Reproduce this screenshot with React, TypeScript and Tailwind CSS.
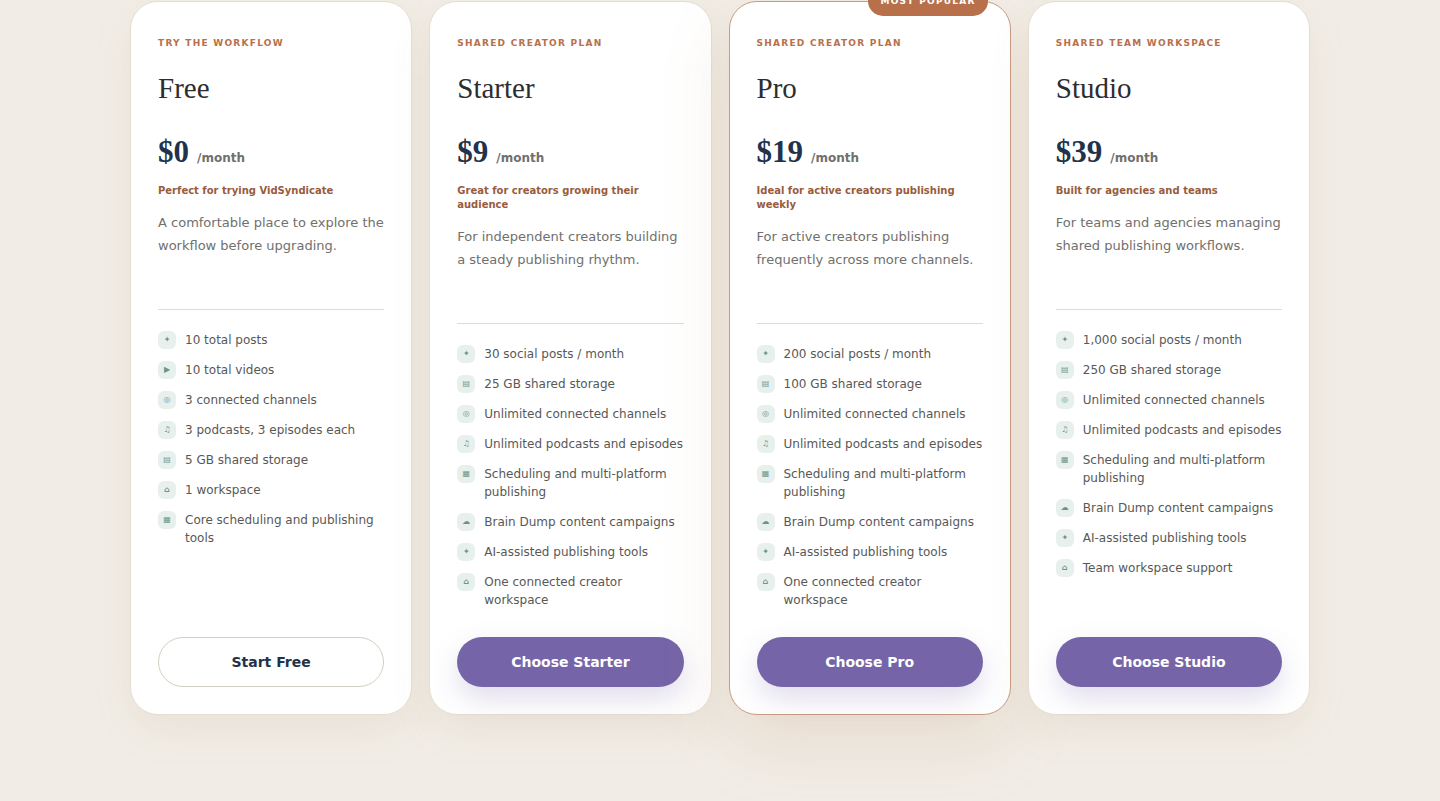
import React from 'react';
import clsx from 'clsx';

interface Feature {
  icon: string;
  label: string;
}

interface Plan {
  name: string;
  eyebrow: string;
  price: string;
  tagline: string;
  description: string;
  cta: string;
  popular?: boolean;
  features: Feature[];
}

const ICONS = {
  posts: '✦',
  videos: '▶',
  channels: '◎',
  podcasts: '♫',
  storage: '▤',
  workspace: '⌂',
  schedule: '▦',
  cloud: '☁',
};

// Included in every paid plan
const SHARED_FEATURES: Feature[] = [
  { icon: ICONS.channels, label: 'Unlimited connected channels' },
  { icon: ICONS.podcasts, label: 'Unlimited podcasts and episodes' },
  { icon: ICONS.schedule, label: 'Scheduling and multi-platform publishing' },
  { icon: ICONS.cloud, label: 'Brain Dump content campaigns' },
  { icon: ICONS.posts, label: 'AI-assisted publishing tools' },
];

const PLANS: Plan[] = [
  {
    name: 'Free',
    eyebrow: 'Try the workflow',
    price: '$0',
    tagline: 'Perfect for trying VidSyndicate',
    description: 'A comfortable place to explore the workflow before upgrading.',
    cta: 'Start Free',
    features: [
      { icon: ICONS.posts, label: '10 total posts' },
      { icon: ICONS.videos, label: '10 total videos' },
      { icon: ICONS.channels, label: '3 connected channels' },
      { icon: ICONS.podcasts, label: '3 podcasts, 3 episodes each' },
      { icon: ICONS.storage, label: '5 GB shared storage' },
      { icon: ICONS.workspace, label: '1 workspace' },
      { icon: ICONS.schedule, label: 'Core scheduling and publishing tools' },
    ],
  },
  {
    name: 'Starter',
    eyebrow: 'Shared creator plan',
    price: '$9',
    tagline: 'Great for creators growing their audience',
    description: 'For independent creators building a steady publishing rhythm.',
    cta: 'Choose Starter',
    features: [
      { icon: ICONS.posts, label: '30 social posts / month' },
      { icon: ICONS.storage, label: '25 GB shared storage' },
      ...SHARED_FEATURES,
      { icon: ICONS.workspace, label: 'One connected creator workspace' },
    ],
  },
  {
    name: 'Pro',
    eyebrow: 'Shared creator plan',
    price: '$19',
    tagline: 'Ideal for active creators publishing weekly',
    description: 'For active creators publishing frequently across more channels.',
    cta: 'Choose Pro',
    popular: true,
    features: [
      { icon: ICONS.posts, label: '200 social posts / month' },
      { icon: ICONS.storage, label: '100 GB shared storage' },
      ...SHARED_FEATURES,
      { icon: ICONS.workspace, label: 'One connected creator workspace' },
    ],
  },
  {
    name: 'Studio',
    eyebrow: 'Shared team workspace',
    price: '$39',
    tagline: 'Built for agencies and teams',
    description: 'For teams and agencies managing shared publishing workflows.',
    cta: 'Choose Studio',
    features: [
      { icon: ICONS.posts, label: '1,000 social posts / month' },
      { icon: ICONS.storage, label: '250 GB shared storage' },
      ...SHARED_FEATURES,
      { icon: ICONS.workspace, label: 'Team workspace support' },
    ],
  },
];

function FeatureItem({ icon, label }: Feature) {
  return (
    <li className="flex items-start gap-[9px] text-[12px] leading-[18px] text-[#585856]">
      <span
        aria-hidden="true"
        className="flex size-[18px] shrink-0 items-center justify-center rounded-md bg-[#e7f0ed] text-[8px] leading-none font-bold text-[#6b9487]"
      >
        {icon}
      </span>
      <span>{label}</span>
    </li>
  );
}

function PlanCard({ plan }: { plan: Plan }) {
  return (
    <article
      className={clsx(
        'relative flex flex-col rounded-[28px] border bg-white px-[27px] pt-[34px] pb-[27px]',
        plan.popular
          ? 'border-[#c79a83] shadow-[0_28px_70px_rgba(184,122,74,0.15)]'
          : 'border-[#e5ddd0] shadow-[0_16px_44px_rgba(150,104,48,0.08)]'
      )}
    >
      {plan.popular && (
        <span className="absolute -top-4 right-[22px] rounded-full bg-[#b8704a] px-3 py-2 text-[9px] leading-[14px] font-bold tracking-[0.14em] text-white uppercase">
          Most popular
        </span>
      )}

      <p className="text-[9px] leading-[14px] font-bold tracking-[0.14em] text-[#b8704a] uppercase">{plan.eyebrow}</p>
      <h3 className="mt-[21px] font-['Liberation_Serif',serif] text-[29px] leading-[34px] text-[#2d2d2f]">
        {plan.name}
      </h3>

      <div className="mt-[29px] flex items-baseline gap-2">
        <strong className="font-['Liberation_Serif',serif] text-[31px] leading-9 font-bold text-[#22324a]">
          {plan.price}
        </strong>
        <span className="text-[12px] font-bold text-[#70706d]">/month</span>
      </div>

      <p className="mt-[14px] text-[10px] leading-[14px] font-bold text-[#985c3c]">{plan.tagline}</p>
      <p className="mt-[13px] min-h-[69px] text-[13px] leading-[23px] text-[#70706d]">{plan.description}</p>

      <ul className="mt-[29px] mb-7 flex flex-col gap-3 border-t border-[#dedcd8] pt-[21px]">
        {plan.features.map((feature) => (
          <FeatureItem key={feature.label} {...feature} />
        ))}
      </ul>

      <button
        type="button"
        className={clsx(
          'mt-auto h-[50px] w-full cursor-pointer rounded-full text-[14px] font-bold',
          plan.price === '$0'
            ? 'border border-[#d3cfc0] bg-white text-[#22324a]'
            : 'bg-[#7565a8] text-white shadow-[0_12px_28px_rgba(117,101,168,0.22)]'
        )}
      >
        {plan.cta}
      </button>
    </article>
  );
}

export default function App() {
  return (
    <main className="min-h-screen overflow-hidden bg-[#f1ede6] px-6 pt-px pb-20 font-['DejaVu_Sans',sans-serif]">
      <section aria-label="Pricing plans" className="mx-auto grid max-w-[1180px] gap-[17px] sm:grid-cols-2 lg:grid-cols-4">
        {PLANS.map((plan) => (
          <PlanCard key={plan.name} plan={plan} />
        ))}
      </section>
    </main>
  );
}
